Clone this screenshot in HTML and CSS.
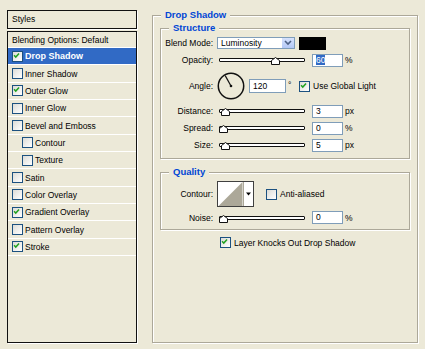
FILE: index.html
```html
<!DOCTYPE html>
<html lang="en">
<head>
    <meta charset="UTF-8">
    <title>Layer Style - Drop Shadow</title>
    <link rel="stylesheet" href="styles.css">
</head>
<body>
<div class="dialog">

    <!-- Style list -->
    <div class="side">
        <div class="styles-head">Styles</div>
        <ul class="style-list">
            <li class="row first">Blending Options: Default</li>
            <li class="row selected"><span class="cb"><svg viewBox="0 0 11 11"><path d="M2.5 5.2 L4.6 7.4 L8.6 3" /></svg></span>Drop Shadow</li>
            <li class="row"><span class="cb"></span>Inner Shadow</li>
            <li class="row"><span class="cb"><svg viewBox="0 0 11 11"><path d="M2.5 5.2 L4.6 7.4 L8.6 3" /></svg></span>Outer Glow</li>
            <li class="row"><span class="cb"></span>Inner Glow</li>
            <li class="row"><span class="cb"></span>Bevel and Emboss</li>
            <li class="row sub"><span class="cb"></span>Contour</li>
            <li class="row sub"><span class="cb"></span>Texture</li>
            <li class="row"><span class="cb"></span>Satin</li>
            <li class="row"><span class="cb"></span>Color Overlay</li>
            <li class="row"><span class="cb"><svg viewBox="0 0 11 11"><path d="M2.5 5.2 L4.6 7.4 L8.6 3" /></svg></span>Gradient Overlay</li>
            <li class="row"><span class="cb"></span>Pattern Overlay</li>
            <li class="row"><span class="cb"><svg viewBox="0 0 11 11"><path d="M2.5 5.2 L4.6 7.4 L8.6 3" /></svg></span>Stroke</li>
        </ul>
    </div>

    <!-- Drop Shadow settings -->
    <fieldset class="group outer">
        <legend>Drop Shadow</legend>

        <fieldset class="group structure">
            <legend>Structure</legend>

            <div class="field f-blend">
                <span class="label">Blend Mode:</span>
                <div class="select">
                    <span class="select-text">Luminosity</span>
                    <span class="select-btn"><svg viewBox="0 0 11 10"><path d="M2.5 3 L5.5 6 L8.5 3" /></svg></span>
                </div>
                <div class="swatch"></div>
            </div>

            <div class="field f-opacity">
                <span class="label">Opacity:</span>
                <div class="slider"><div class="track"></div><svg class="thumb" style="left: 60%" viewBox="0 0 9 8"><path d="M0.5 7.5 V3.5 L4.5 0.5 L8.5 3.5 V7.5 Z" /></svg></div>
                <div class="num"><span class="sel">60</span></div>
                <span class="unit">%</span>
            </div>

            <div class="field f-angle">
                <span class="label">Angle:</span>
                <svg class="dial" viewBox="0 0 28 28">
                    <circle cx="14" cy="14" r="12.7" />
                    <line x1="14" y1="14" x2="8.2" y2="3.6" />
                    <circle class="dot" cx="14" cy="14" r="1.3" />
                </svg>
                <div class="num wide">120</div>
                <span class="deg">°</span>
                <span class="cb"><svg viewBox="0 0 11 11"><path d="M2.5 5.2 L4.6 7.4 L8.6 3" /></svg></span>
                <span class="cb-label">Use Global Light</span>
            </div>

            <div class="field f-distance">
                <span class="label">Distance:</span>
                <div class="slider"><div class="track"></div><svg class="thumb" style="left: 2%" viewBox="0 0 9 8"><path d="M0.5 7.5 V3.5 L4.5 0.5 L8.5 3.5 V7.5 Z" /></svg></div>
                <div class="num">3</div>
                <span class="unit">px</span>
            </div>

            <div class="field f-spread">
                <span class="label">Spread:</span>
                <div class="slider"><div class="track"></div><svg class="thumb" style="left: 0%" viewBox="0 0 9 8"><path d="M0.5 7.5 V3.5 L4.5 0.5 L8.5 3.5 V7.5 Z" /></svg></div>
                <div class="num">0</div>
                <span class="unit">%</span>
            </div>

            <div class="field f-size">
                <span class="label">Size:</span>
                <div class="slider"><div class="track"></div><svg class="thumb" style="left: 2%" viewBox="0 0 9 8"><path d="M0.5 7.5 V3.5 L4.5 0.5 L8.5 3.5 V7.5 Z" /></svg></div>
                <div class="num">5</div>
                <span class="unit">px</span>
            </div>
        </fieldset>

        <fieldset class="group quality">
            <legend>Quality</legend>

            <div class="field f-contour">
                <span class="label">Contour:</span>
                <div class="contour">
                    <svg class="curve" viewBox="0 0 26 26"><path d="M0 26 L26 0 L26 26 Z" /></svg>
                    <span class="contour-btn"><svg viewBox="0 0 9 6"><path d="M2 1.5 H7 L4.5 4.5 Z" /></svg></span>
                </div>
                <span class="cb"></span>
                <span class="cb-label">Anti-aliased</span>
            </div>

            <div class="field f-noise">
                <span class="label">Noise:</span>
                <div class="slider"><div class="track"></div><svg class="thumb" style="left: 0%" viewBox="0 0 9 8"><path d="M0.5 7.5 V3.5 L4.5 0.5 L8.5 3.5 V7.5 Z" /></svg></div>
                <div class="num">0</div>
                <span class="unit">%</span>
            </div>
        </fieldset>

        <div class="field f-knock">
            <span class="cb"><svg viewBox="0 0 11 11"><path d="M2.5 5.2 L4.6 7.4 L8.6 3" /></svg></span>
            <span class="cb-label">Layer Knocks Out Drop Shadow</span>
        </div>
    </fieldset>

</div>
</body>
</html>
```

FILE: styles.css
```css
body {
    margin: 0;
    background-color: #ece9d8;
    font-family: "Liberation Sans", Arial, sans-serif;
    font-size: 8.5px;
    color: #000;
}

.dialog {
    display: flex;
    width: 425px;
    height: 349px;
    padding: 10px 0 0 7px;
    box-sizing: border-box;
}

/* left column */

.side {
    width: 130px;
    display: flex;
    flex-direction: column;
    gap: 2px;
}

.styles-head {
    height: 17px;
    line-height: 17px;
    padding-left: 4px;
    border: 1px solid #111;
    box-shadow: 1px 1px 0 #fff;
}

.style-list {
    list-style: none;
    margin: 0;
    padding: 0;
    height: 310px;
    border: 1px solid #111;
    box-shadow: 1px 1px 0 #fff;
}

.row {
    display: flex;
    align-items: center;
    height: 16.35px;
    padding-left: 4px;
    border-bottom: 1px solid #fff;
    white-space: nowrap;
}

.row.first {
    height: 15px;
}

.row.sub {
    padding-left: 14px;
}

.row.selected {
    background-color: #316ac5;
    color: #fff;
    font-weight: bold;
    font-size: 9px;
}

.cb {
    width: 9px;
    height: 9px;
    flex: none;
    border: 1px solid #1c5180;
    background: linear-gradient(135deg, #dcdcd7, #fff);
    margin-right: 2px;
    display: flex;
}

.cb svg {
    width: 9px;
    height: 9px;
    margin: -1px 0 0 -1px;
}

.cb svg path {
    fill: none;
    stroke: #21a121;
    stroke-width: 1.8;
}

/* right column */

.group {
    margin: 0;
    min-width: 0;
    border: 1px solid #aca899;
    box-shadow: inset 1px 1px 0 #fff, 1px 1px 0 #fff;
    box-sizing: border-box;
}

.group legend {
    padding: 0 4px;
    line-height: 10px;
    font-size: 9.5px;
    font-weight: bold;
    color: #0046d5;
    background-color: #ece9d8;
}

.outer {
    margin-left: 15px;
    width: 266px;
    height: 333px;
    padding: 3px 7px 0 7px;
}

.outer > legend {
    margin-left: 1px;
}

.structure, .quality {
    padding: 3px 0 6px 0;
}

.structure > legend, .quality > legend {
    margin-left: 8px;
}

.quality {
    margin-top: 8px;
    padding: 4px 0 5px 0;
}

.field {
    display: flex;
    align-items: center;
    height: 14px;
    white-space: nowrap;
}

.label {
    width: 52px;
    margin-right: 4px;
    text-align: right;
    flex: none;
}

.f-opacity, .f-spread, .f-size {
    margin-top: 3px;
}

.f-angle {
    margin-top: 5px;
    height: 28px;
}

.f-distance {
    margin-top: 4px;
}

.select {
    width: 78px;
    height: 12px;
    box-sizing: border-box;
    border: 1px solid #7f9db9;
    background-color: #fff;
    display: flex;
    align-items: center;
    justify-content: space-between;
}

.select-text {
    padding-left: 3px;
}

.select-btn {
    width: 12px;
    height: 10px;
    background: linear-gradient(#d6e2fd, #b3c8f6);
    border-left: 1px solid #fff;
    display: flex;
}

.select-btn svg {
    width: 12px;
    height: 10px;
}

.select-btn svg path {
    fill: none;
    stroke: #4d6185;
    stroke-width: 1.6;
}

.swatch {
    width: 27px;
    height: 13px;
    margin-left: 4px;
    background-color: #000;
}

.slider {
    position: relative;
    width: 86px;
    height: 14px;
    margin-left: 2px;
    margin-right: 7px;
    flex: none;
}

.track {
    margin-top: 5px;
    height: 2px;
    border: 1px solid #111;
    border-radius: 1px;
    background-color: #fff;
}

.thumb {
    position: absolute;
    top: 4px;
    width: 9px;
    height: 8px;
}

.thumb path {
    fill: #fff;
    stroke: #111;
    stroke-width: 1;
}

.num {
    width: 31px;
    height: 13px;
    box-sizing: border-box;
    border: 1px solid #7f9db9;
    background-color: #fff;
    line-height: 11px;
    padding-left: 3px;
    flex: none;
}

.num.wide {
    width: 37px;
    height: 14px;
    line-height: 12px;
}

.sel {
    background-color: #316ac5;
    color: #fff;
}

.unit {
    margin-left: 2px;
}

.dial {
    width: 28px;
    height: 28px;
    margin-right: 4px;
    flex: none;
}

.dial circle {
    fill: none;
    stroke: #111;
    stroke-width: 1.5;
}

.dial line {
    stroke: #111;
    stroke-width: 1.2;
}

.dial .dot {
    fill: #111;
    stroke: none;
}

.deg {
    align-self: flex-start;
    margin: 8px 0 0 2px;
    width: 11px;
}

.cb-label {
    margin-left: 1px;
}

.f-contour {
    height: 26px;
}

.contour {
    display: flex;
    height: 26px;
    box-sizing: border-box;
    border: 1px solid #404040;
    background-color: #fff;
    margin-right: 12px;
}

.curve {
    width: 25px;
    height: 24px;
}

.curve path {
    fill: #aca899;
}

.contour-btn {
    width: 9px;
    border-left: 1px solid #aca899;
    display: flex;
    align-items: center;
}

.contour-btn svg {
    width: 9px;
    height: 6px;
}

.f-noise {
    margin-top: 4px;
    height: 13px;
}

.f-knock {
    margin: 6px 0 0 60px;
    height: 13px;
}
```
